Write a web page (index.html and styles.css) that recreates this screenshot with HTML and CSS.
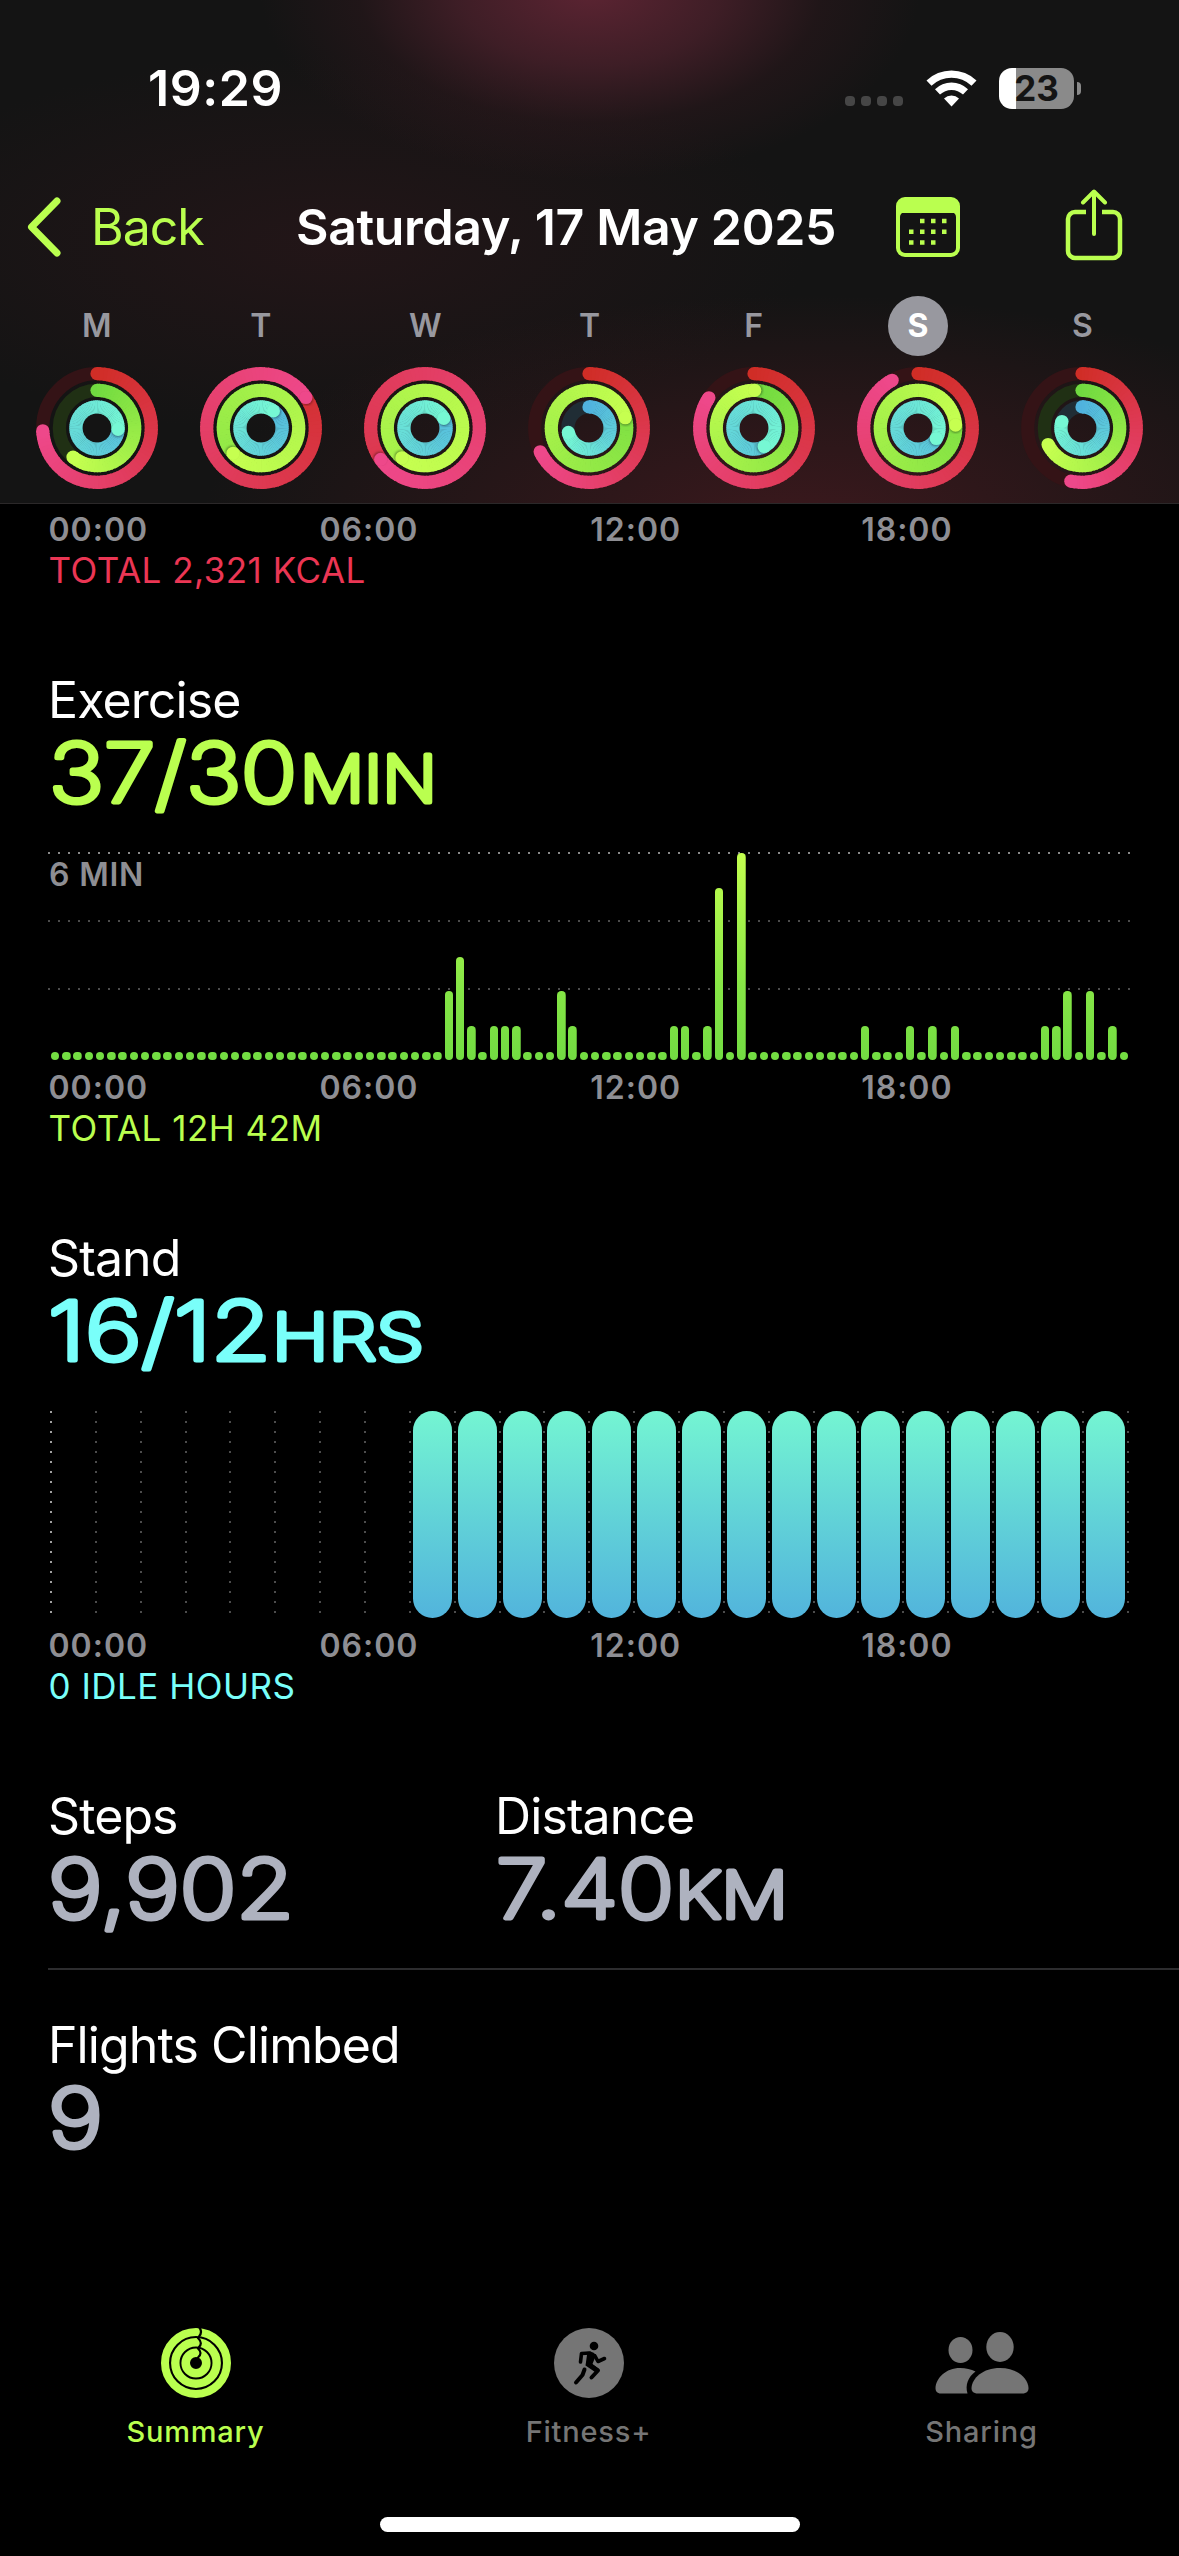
FILE: index.html
```
<!DOCTYPE html>
<html lang="en">

<head>
    <meta charset="utf-8">
    <meta name="viewport" content="width=device-width, initial-scale=1">
    <title>Summary</title>
    <link rel="stylesheet" href="styles.css">
</head>

<body>
    <header class="header">
        <div class="status">
            <span class="time">19:29</span>
            <div class="signal"><i></i><i></i><i></i><i></i></div>
            <svg class="wifi" width="51" height="38" viewBox="0 0 51 38">
                <path d="M0.500 11.500 A36 36 0 0 1 50.500 11.500 L45.500 16.700 A29 29 0 0 0 5.500 16.700 Z" />
                <path d="M9 20.300 A23.500 23.500 0 0 1 42 20.300 L37 25.600 A16.500 16.500 0 0 0 14 25.600 Z" />
                <path d="M18 29.500 A11 11 0 0 1 33 29.500 L25.500 37.500 Z" />
            </svg>
            <div class="battery">23</div>
            <span class="nub"></span>
        </div>

        <nav class="nav">
            <svg class="chevron" width="36" height="60" viewBox="0 0 36 60">
                <path d="M31 4 L5.500 30 L31 56" />
            </svg>
            <a class="back" href="#">Back</a>
            <h1>Saturday, 17 May 2025</h1>
            <svg class="calendar" width="64" height="60" viewBox="0 0 64 60">
                <rect x="2" y="2" width="60" height="56" rx="7" />
                <path class="fill" d="M2 16 V9 A7 7 0 0 1 9 2 H55 A7 7 0 0 1 62 9 V16 Z" />
                <path class="fill" d="M3 14h6v1a5 5 0 0 0-5 5H3zM61 14h-6v1a5 5 0 0 1 5 5h1z" />
                <path class="days" d="M24 24h4.500M35 24h4.500M46 24h4.500M13 34.700h4.500M24 34.700h4.500M35 34.700h4.500M46 34.700h4.500M13 45.400h4.500M24 45.400h4.500M35 45.400h4.500" />
            </svg>
            <svg class="share" width="58" height="73" viewBox="0 0 58 73">
                <path d="M21 23 H10 A7 7 0 0 0 3 30 V62 A7 7 0 0 0 10 69 H48 A7 7 0 0 0 55 62 V30 A7 7 0 0 0 48 23 H37" />
                <path class="arrow" d="M29 45 V3 M18 13.500 L29 2.500 L40 13.500" />
            </svg>
        </nav>

        <div class="week" id="week"></div>
    </header>

    <main>
        <section class="move">
            <div class="axis"><span>00:00</span><span>06:00</span><span>12:00</span><span>18:00</span></div>
            <p class="total red">TOTAL 2,321 KCAL</p>
        </section>

        <section>
            <h2>Exercise</h2>
            <svg class="value lime" width="500" height="86"><text x="1" y="72" textLength="248" lengthAdjust="spacingAndGlyphs">37/30</text><text class="unit" x="252" y="72" textLength="137" lengthAdjust="spacingAndGlyphs">MIN</text></svg>
            <div class="chart exercise">
                <span class="scale">6 MIN</span>
                <div class="bars" id="exercise"></div>
            </div>
            <div class="axis"><span>00:00</span><span>06:00</span><span>12:00</span><span>18:00</span></div>
            <p class="total lime">TOTAL 12H 42M</p>
        </section>

        <section>
            <h2>Stand</h2>
            <svg class="value cyan" width="500" height="86"><text x="0" y="72" textLength="223" lengthAdjust="spacingAndGlyphs">16/12</text><text class="unit" x="224" y="72" textLength="152" lengthAdjust="spacingAndGlyphs">HRS</text></svg>
            <div class="chart stand" id="stand"></div>
            <div class="axis"><span>00:00</span><span>06:00</span><span>12:00</span><span>18:00</span></div>
            <p class="total cyan">0 IDLE HOURS</p>
        </section>

        <section class="stats">
            <div>
                <h2>Steps</h2>
                <svg class="value grey" width="400" height="100"><text x="0" y="72" textLength="246" lengthAdjust="spacingAndGlyphs">9,902</text></svg>
            </div>
            <div>
                <h2>Distance</h2>
                <svg class="value grey" width="400" height="100"><text x="1" y="72" textLength="178" lengthAdjust="spacingAndGlyphs">7.40</text><text class="unit" x="180" y="72" textLength="113" lengthAdjust="spacingAndGlyphs">KM</text></svg>
            </div>
        </section>

        <section class="flights">
            <h2>Flights Climbed</h2>
            <svg class="value grey" width="400" height="86"><text x="0" y="72" textLength="55" lengthAdjust="spacingAndGlyphs">9</text></svg>
        </section>
    </main>

    <footer>
        <nav class="tabs">
            <a class="active" href="#">
                <svg width="70" height="70" viewBox="0 0 70 70">
                    <circle cx="35" cy="35" r="31" stroke-width="8" />
                    <circle cx="35" cy="35" r="20.700" stroke-width="8.400" />
                    <circle cx="35" cy="35" r="10.300" stroke-width="8.600" />
                    <path class="gap" d="M38 -1 Q42 4 38 8.500 M37 10 Q42 15 38 19 M37 20.500 Q42 25 37 29.500" />
                </svg>
                <span>Summary</span>
            </a>
            <a href="#">
                <svg width="70" height="70" viewBox="0 0 70 70">
                    <circle class="disc" cx="35" cy="35" r="35" />
                    <circle class="ink" cx="40" cy="18" r="4.300" />
                    <path class="limb" stroke-width="3.600" d="M26.500 34 L27.500 25.500 L36 25 M41 28 L44 33.500 L50.500 30.500" />
                    <path class="ink" d="M32 24 Q39 22.500 42 27 L38.500 36 L45 41 L41 44 L31.500 37.500 L33 27 Z" />
                    <path class="limb" stroke-width="4" d="M36.500 37.500 L44 42.500 L37.500 49.500 M30.500 41.500 L28.500 47 L22 54.500" />
                </svg>
                <span>Fitness+</span>
            </a>
            <a href="#">
                <svg width="94" height="70" viewBox="0 0 94 70">
                    <ellipse class="disc" cx="25.500" cy="22" rx="12" ry="13" />
                    <path class="disc" d="M6 65.500 C2 65.500 .5 63 .5 60 C1 50 11 40 25 40 C31 40 36 41.500 40.500 43.500 C33 49 30 57 32.500 65.500 Z" />
                    <ellipse class="disc" cx="65" cy="19" rx="13.700" ry="15" />
                    <path class="disc" d="M43 65.500 C38 65.500 36.500 63 36.500 60 C37 50 48 40 65 40 C82 40 93 50 93.500 60 C93.500 63 92 65.500 87 65.500 Z" />
                </svg>
                <span>Sharing</span>
            </a>
        </nav>
        <div class="home"></div>
    </footer>

    <script src="script.js"></script>
</body>

</html>
```
FILE: styles.css
```
* {
    box-sizing: border-box;
}

body {
    margin: 0;
    width: 1179px;
    height: 2556px;
    display: flex;
    flex-direction: column;
    overflow: hidden;
    background-color: #000;
    color: #fff;
    font-family: Inter, "Liberation Sans", sans-serif;
}

h1,
h2,
p {
    margin: 0;
    font-weight: 400;
}

a {
    color: inherit;
    text-decoration: none;
}

svg {
    display: block;
    flex: none;
}

.red {
    color: #eb3654;
}

.lime {
    color: #baff4f;
}

.cyan {
    color: #79fffa;
}

.grey {
    color: #aeb2bf;
}

/* Header */
.header {
    height: 504px;
    border-bottom: 1px solid #2b2829;
    background:
        radial-gradient(ellipse 330px 190px at 590px -10px, rgba(110, 40, 58, .8), rgba(90, 36, 50, .6) 40%, rgba(60, 26, 34, .3) 70%, transparent),
        radial-gradient(ellipse 480px 190px at 330px 245px, rgba(60, 24, 30, .36), transparent),
        radial-gradient(ellipse 600px 230px at 800px 525px, rgba(90, 28, 36, .56), transparent),
        #141414;
}

.status {
    height: 176px;
    padding: 0 98px 0 148px;
    display: flex;
    align-items: center;
}

.time {
    flex: 1;
    font-size: 50px;
    font-weight: 600;
    letter-spacing: .6px;
}

.signal {
    display: flex;
    gap: 6px;
    margin: 26px 23px 0 0;
}

.signal i {
    width: 10px;
    height: 10px;
    border-radius: 4px;
    background-color: #464646;
}

.wifi {
    fill: #fff;
    margin-right: 22px;
}

.battery {
    width: 75px;
    height: 41px;
    border-radius: 13px;
    background: linear-gradient(to right, #fff 17px, #8a8a8a 17px);
    color: #141414;
    font-size: 35px;
    font-weight: 700;
    line-height: 41px;
    text-align: center;
}

.nub {
    width: 4px;
    height: 13px;
    margin-left: 3px;
    border-radius: 0 5px 5px 0;
    background-color: #8a8a8a;
}

.nav {
    height: 102px;
    padding: 0 56px 0 26px;
    display: flex;
    align-items: center;
    color: #baff4f;
    font-size: 50px;
}

.nav svg {
    fill: none;
    stroke: #baff4f;
    stroke-width: 4.5;
    stroke-linecap: round;
    stroke-linejoin: round;
}

.nav .chevron {
    stroke-width: 7;
}

.back {
    width: 205px;
    margin-left: 29px;
    letter-spacing: -1px;
}

.nav h1 {
    flex: 1;
    color: #fff;
    font-size: 50px;
    font-weight: 600;
    letter-spacing: -.35px;
    white-space: nowrap;
}

.nav .calendar {
    margin-right: 105px;
    stroke-width: 4;
}

.calendar .fill {
    fill: #baff4f;
    stroke: none;
}

.calendar .days {
    stroke-width: 4.5;
    stroke-linecap: butt;
}

.nav .share {
    margin-top: -3px;
    stroke-linecap: butt;
}

.share .arrow {
    stroke-width: 4;
    stroke-linecap: round;
}

.week {
    display: flex;
    padding: 18px 14.500px 0 14.500px;
}

.day {
    flex: 1;
    display: flex;
    flex-direction: column;
    align-items: center;
    gap: 11px;
}

.day span {
    width: 60px;
    border-radius: 50%;
    color: #98989f;
    font-size: 32px;
    font-weight: 600;
    line-height: 60px;
    text-align: center;
}

.day .today {
    background-color: #98989f;
    color: #fff;
    font-weight: 700;
}

/* Sections */
main {
    padding-left: 48px;
}

section {
    margin-bottom: 78px;
}

.move {
    padding-top: 4px;
}

.move .axis {
    margin-top: 0;
}

h2 {
    font-size: 50px;
    line-height: 60px;
    letter-spacing: -.9px;
}

/* thin glyphs with a round stroke read as a rounded typeface */
.value {
    height: 86px;
    overflow: visible;
    fill: currentColor;
    stroke: currentColor;
    stroke-width: 5;
    stroke-linejoin: round;
    font-size: 81px;
    font-weight: 200;
}

.value .unit {
    font-size: 64px;
}

.chart {
    width: 1083px;
    height: 208px;
    margin-top: 36px;
}

.exercise {
    display: flex;
    flex-direction: column;
    background:
        repeating-linear-gradient(to right, #8a8a8a 0 2px, transparent 2px 10px) 0 0 / 1082px 2px no-repeat,
        repeating-linear-gradient(to right, #4c4c4c 0 2px, transparent 2px 10px) 0 68px / 1082px 2px no-repeat,
        repeating-linear-gradient(to right, #4c4c4c 0 2px, transparent 2px 10px) 0 136px / 1082px 2px no-repeat;
}

.scale {
    height: 0;
    padding-left: 1px;
    color: #8e8e93;
    font-size: 32px;
    font-weight: 600;
    line-height: 46px;
    letter-spacing: .8px;
}

.bars {
    height: 208px;
    width: 1080px;
    margin-left: 1.500px;
    flex: none;
    display: flex;
    align-items: flex-end;
}

.bars i {
    flex: 1;
    margin: 0 1.400px;
    border-radius: 4.200px;
    background: linear-gradient(to top, #72dc42, #86e646 35%, #c4ff4f) bottom / 100% 208px no-repeat;
}

.stand {
    display: grid;
    grid-template-columns: repeat(24, 44.870px) 2px;
    padding-left: 2px;
}

.stand div {
    padding: 1px 0 0 4px;
    background: repeating-linear-gradient(to bottom, #4c4c4c 0 2px, transparent 2px 10px) 0 1px / 2px 202px no-repeat;
}

.stand div:first-child {
    background-image: repeating-linear-gradient(to bottom, #a0a0a0 0 2px, transparent 2px 10px);
}

.stand i {
    display: block;
    width: 39px;
    height: 207px;
    border-radius: 20px;
    background: linear-gradient(#74f5d2, #60d0d8 55%, #52b4dc);
}

.axis {
    width: 1084px;
    margin-top: 6px;
    padding: 1px 0 0 .500px;
    height: 42px;
    display: grid;
    grid-template-columns: repeat(4, 1fr);
    color: #8e8e93;
    font-size: 32px;
    font-weight: 600;
    line-height: 42px;
    letter-spacing: 1px;
}

.total {
    padding-left: .500px;
    font-size: 35px;
    line-height: 41px;
    height: 42px;
    letter-spacing: .500px;
}

.stats {
    display: grid;
    grid-template-columns: 447px 1fr;
    height: 184px;
    margin-bottom: 45px;
    border-bottom: 2px solid #2c2c2e;
}

.flights {
    margin: 0;
}

/* Tab bar */
footer {
    margin-top: auto;
    padding-bottom: 24px;
}

.tabs {
    display: flex;
    margin-right: 1px;
    margin-left: -1px;
}

.tabs a {
    flex: 1;
    display: flex;
    flex-direction: column;
    align-items: center;
    gap: 13px;
    color: #757575;
    font-size: 29px;
    font-weight: 500;
    line-height: 41px;
    height: 123px;
    letter-spacing: .8px;
}

.tabs .active {
    color: #baff4f;
}

.tabs circle {
    fill: none;
    stroke: currentColor;
}

.tabs .disc {
    fill: currentColor;
    stroke: none;
}

.tabs .ink {
    fill: #000;
    stroke: none;
}

.limb,
.gap {
    fill: none;
    stroke: #000;
    stroke-linecap: round;
    stroke-linejoin: round;
}

.gap {
    stroke-width: 2.2;
}

.home {
    width: 420px;
    height: 15px;
    margin: 66px auto 0;
    border-radius: 8px;
    background-color: #fff;
}
```
FILE: script.js
```
// progress of move, exercise and stand as a share of the goal
const week = [
    { day: "M", rings: [0.742, 0.61, 1.26] },
    { day: "T", rings: [1.155, 1.633, 1.10] },
    { day: "W", rings: [1.652, 2.605, 1.175] },
    { day: "T", rings: [0.678, 1.206, 0.717] },
    { day: "F", rings: [0.844, 1.003, 1.42] },
    { day: "S", rings: [0.921, 1.2375, 1.333], today: true },
    { day: "S", rings: [0.533, 0.678, 0.80] }
];

const ringStyles = [
    { r: 54.3, from: [208, 45, 38], to: [238, 72, 138], track: "#341316" },
    { r: 37.7, from: [112, 218, 64], to: [198, 255, 80], track: "#203014" },
    { r: 21.1, from: [80, 178, 222], to: [118, 248, 212], track: "#202d35" }
];

function mix(a, b, t) {
    return "rgb(" + a.map((v, i) => Math.round(v + (b[i] - v) * t)).join(",") + ")";
}

function point(r, turn) {
    const a = turn * 2 * Math.PI;
    return [61 + r * Math.sin(a), 61 - r * Math.cos(a)];
}

function arc(r, start, end, color) {
    const [x1, y1] = point(r, start);
    const [x2, y2] = point(r, end);
    return `<path d="M${x1} ${y1} A${r} ${r} 0 0 1 ${x2} ${y2}" fill="none" stroke="${color}" stroke-width="13.2"/>`;
}

function dot(r, turn, color, extra = "") {
    const [x, y] = point(r, turn);
    return `<circle cx="${x}" cy="${y}" r="6.6" fill="${color}" ${extra}/>`;
}

function ring(style, progress, id) {
    const { r, from, to, track } = style;
    const start = Math.max(0, progress - 1);
    const step = 1 / 90;
    let out = `<circle cx="61" cy="61" r="${r}" fill="none" stroke="${track}" stroke-width="13.2"/>`;

    if (progress < 1) {
        out += dot(r, 0, mix(from, to, 0));
    }
    for (let t = start; t < progress - 0.001; t += step) {
        const end = Math.min(t + step, progress);
        // small overlap hides the seams between the pieces
        out += arc(r, t - (t > start ? 0.003 : 0), end, mix(from, to, end / progress));
    }
    if (progress > 1) {
        out += `<g mask="url(#${id})">` + dot(r, progress + 0.010 * 21 / r, "rgba(0,0,0,.35)", 'filter="url(#soft)"') + `</g>`;
    }
    out += dot(r, progress, mix(from, to, 1));
    return out;
}

document.getElementById("week").innerHTML = week.map((d, n) => {
    const masks = ringStyles.map((s, i) =>
        `<mask id="m${n}${i}"><circle cx="61" cy="61" r="${s.r}" fill="none" stroke="#fff" stroke-width="13.2"/></mask>`).join("");
    const rings = ringStyles.map((s, i) => ring(s, d.rings[i], `m${n}${i}`)).join("");
    return `<div class="day"><span class="${d.today ? "today" : ""}">${d.day}</span>
        <svg width="122" height="122" viewBox="0 0 122 122">
            <defs><filter id="soft"><feGaussianBlur stdDeviation="1.2"/></filter>${masks}</defs>${rings}
        </svg></div>`;
}).join("");

// exercise minutes per quarter of an hour
const minutes = {
    35: 2, 36: 3, 37: 1, 39: 1, 40: 1, 41: 1, 45: 2, 46: 1, 55: 1, 56: 1, 58: 1, 59: 5, 61: 6,
    72: 1, 76: 1, 78: 1, 80: 1, 88: 1, 89: 1, 90: 2, 92: 2, 94: 1
};

let bars = "";
for (let i = 0; i < 96; i++) {
    const height = minutes[i] ? minutes[i] * 34.5 : 8.4;
    bars += `<i style="height:${height}px"></i>`;
}
document.getElementById("exercise").innerHTML = bars;

let hours = "";
for (let h = 0; h <= 24; h++) {
    hours += h >= 8 && h < 24 ? "<div><i></i></div>" : "<div></div>";
}
document.getElementById("stand").innerHTML = hours;
```
